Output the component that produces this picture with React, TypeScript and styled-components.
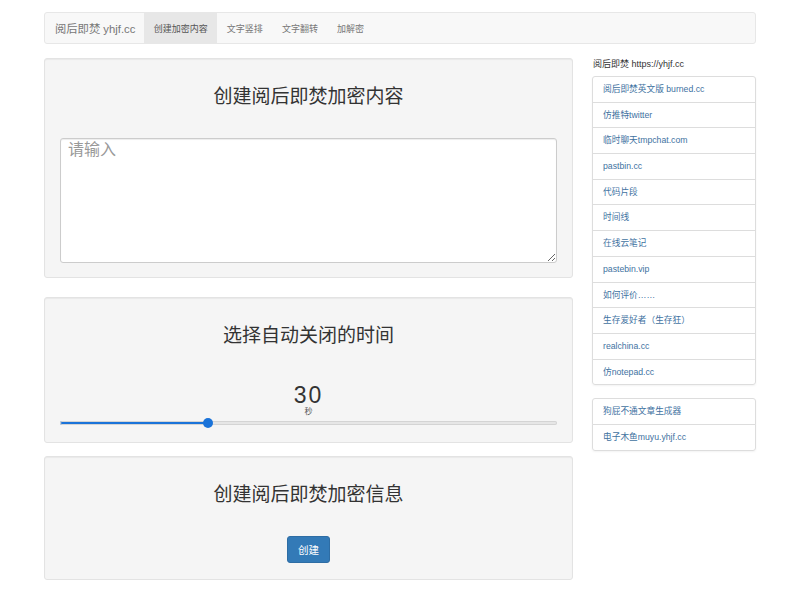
import styled, { createGlobalStyle } from "styled-components";
import { useState } from "react";

const GlobalStyle = createGlobalStyle`
  html, body {
    margin: 0;
    padding: 0;
    background: #fff;
    color: #333;
    font-family: "Liberation Sans", "Noto Sans CJK SC", Arial, sans-serif;
  }
  * { box-sizing: border-box; }
`;

const Container = styled.div`
  width: 712px;
  margin: 0 auto;
  padding-top: 12px;
`;

const Navbar = styled.nav`
  height: 32px;
  display: flex;
  align-items: stretch;
  background: #f8f8f8;
  border: 1px solid #e7e7e7;
  border-radius: 3px;
`;

const Brand = styled.a`
  display: flex;
  align-items: center;
  padding: 0 9px 0 10px;
  font-size: 11.3px;
  color: #777;
  text-decoration: none;
`;

const NavItem = styled.a<{ $active?: boolean }>`
  display: flex;
  align-items: center;
  padding: 0 9.5px;
  font-size: 9px;
  color: ${(p) => (p.$active ? "#555" : "#777")};
  background: ${(p) => (p.$active ? "#e7e7e7" : "transparent")};
  text-decoration: none;
`;

const Row = styled.div`
  display: flex;
  align-items: flex-start;
  gap: 19px;
  margin-top: 14px;
`;

const Main = styled.main`
  width: 529px;
  display: flex;
  flex-direction: column;
`;

const Well = styled.section<{ $gap?: number }>`
  background: #f5f5f5;
  border: 1px solid #e3e3e3;
  border-radius: 3px;
  box-shadow: inset 0 1px 1px rgba(0, 0, 0, 0.05);
  padding: 15px 15px 14px;
  margin-top: ${(p) => p.$gap ?? 0}px;
  display: flex;
  flex-direction: column;
  align-items: center;
`;

const Title = styled.h2`
  margin: 12px 0 0;
  font-size: 19px;
  line-height: 21px;
  font-weight: 400;
  color: #333;
`;

const TextArea = styled.textarea`
  width: 100%;
  height: 125px;
  margin-top: 31px;
  padding: 2px 7px;
  font-family: inherit;
  font-size: 16px;
  line-height: 18px;
  color: #555;
  background: #fff;
  border: 1px solid #ccc;
  border-radius: 3px;
  box-shadow: inset 0 1px 1px rgba(0, 0, 0, 0.075);
  outline: none;
  &::placeholder {
    color: #999;
  }
`;

const Seconds = styled.div`
  margin-top: 38px;
  font-size: 23px;
  line-height: 22px;
  letter-spacing: 2px;
  color: #333;
`;

const Unit = styled.div`
  margin-top: 2px;
  font-size: 8px;
  line-height: 8px;
  color: #555;
`;

const Range = styled.input`
  -webkit-appearance: none;
  appearance: none;
  width: 100%;
  height: 4px;
  margin: 5px 0 3px;
  border-radius: 2px;
  outline: none;
  border: none;
  &::-webkit-slider-runnable-track {
    height: 4px;
    background: transparent;
  }
  &::-webkit-slider-thumb {
    -webkit-appearance: none;
    width: 10px;
    height: 10px;
    margin-top: -3px;
    border-radius: 50%;
    background: #1a73d9;
    border: none;
  }
`;

const Button = styled.button`
  margin: 31px 0 2px;
  width: 43px;
  height: 27px;
  padding: 0;
  border: 1px solid #2e6da4;
  border-radius: 3px;
  background: #337ab7;
  color: #fff;
  font-family: inherit;
  font-size: 10.5px;
`;

const Aside = styled.aside`
  width: 164px;
  padding-top: 1px;
`;

const AsideTitle = styled.div`
  font-size: 9px;
  line-height: 10px;
  color: #333;
  padding-left: 1px;
`;

const ListGroup = styled.ul<{ $top: number }>`
  list-style: none;
  margin: ${(p) => p.$top}px 0 0;
  padding: 0;
  border-radius: 3px;
  box-shadow: 0 1px 2px rgba(0, 0, 0, 0.05);
`;

const ListItem = styled.li`
  padding: 7px 10px 6.7px;
  margin-bottom: -1px;
  font-size: 8.7px;
  line-height: 11px;
  color: #41729f;
  background: #fff;
  border: 1px solid #ddd;
  white-space: nowrap;
  &:first-child {
    border-radius: 3px 3px 0 0;
  }
  &:last-child {
    margin-bottom: 0;
    border-radius: 0 0 3px 3px;
  }
`;

const links = [
  "阅后即焚英文版 burned.cc",
  "仿推特twitter",
  "临时聊天tmpchat.com",
  "pastbin.cc",
  "代码片段",
  "时间线",
  "在线云笔记",
  "pastebin.vip",
  "如何评价……",
  "生存爱好者（生存狂）",
  "realchina.cc",
  "仿notepad.cc",
];

const extra = ["狗屁不通文章生成器", "电子木鱼muyu.yhjf.cc"];

const MIN = 1;
const MAX = 100;
const TRACK = 497;
const THUMB = 10;

function App() {
  const [secs, setSecs] = useState(30);
  const frac = (secs - MIN) / (MAX - MIN);
  const fill = ((THUMB / 2 + (TRACK - THUMB) * frac) / TRACK) * 100;
  return (
    <>
      <GlobalStyle />
      <Container>
        <Navbar>
          <Brand href="#">阅后即焚 yhjf.cc</Brand>
          <NavItem $active href="#">创建加密内容</NavItem>
          <NavItem href="#">文字竖排</NavItem>
          <NavItem href="#">文字翻转</NavItem>
          <NavItem href="#">加解密</NavItem>
        </Navbar>
        <Row>
          <Main>
            <Well>
              <Title>创建阅后即焚加密内容</Title>
              <TextArea placeholder="请输入" />
            </Well>
            <Well $gap={19}>
              <Title>选择自动关闭的时间</Title>
              <Seconds>{secs}</Seconds>
              <Unit>秒</Unit>
              <Range
                type="range"
                min={MIN}
                max={MAX}
                value={secs}
                onChange={(e) => setSecs(Number(e.target.value))}
                style={{
                  background: `linear-gradient(to right, #1a73d9 0%, #1a73d9 ${fill}%, #e6e6e6 ${fill}%, #e6e6e6 100%)`,
                  boxShadow: `inset 0 0 0 1px #d4d4d4`,
                }}
              />
            </Well>
            <Well $gap={13}>
              <Title>创建阅后即焚加密信息</Title>
              <Button>创建</Button>
            </Well>
          </Main>
          <Aside>
            <AsideTitle>阅后即焚 https://yhjf.cc</AsideTitle>
            <ListGroup $top={7}>
              {links.map((l) => (
                <ListItem key={l}>{l}</ListItem>
              ))}
            </ListGroup>
            <ListGroup $top={13}>
              {extra.map((l) => (
                <ListItem key={l}>{l}</ListItem>
              ))}
            </ListGroup>
          </Aside>
        </Row>
      </Container>
    </>
  );
}

export default App;
